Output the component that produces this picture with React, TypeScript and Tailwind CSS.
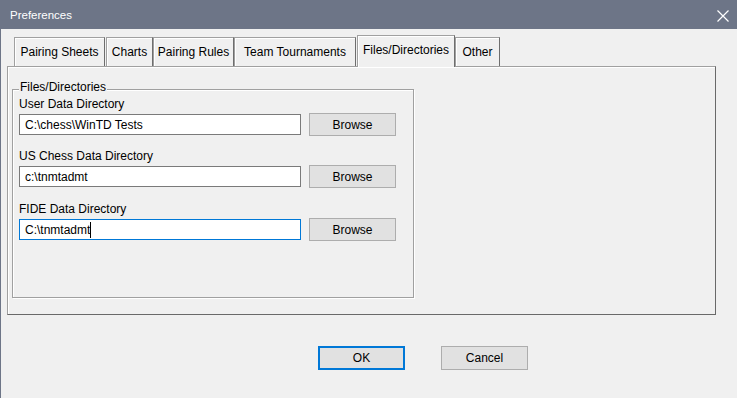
import React from 'react';

const tabs = [
    { label: 'Pairing Sheets', w: 'w-[91px]', ml: 'ml-0' },
    { label: 'Charts', w: 'w-[47px]', ml: 'ml-[1px]' },
    { label: 'Pairing Rules', w: 'w-[81px]', ml: 'ml-0' },
    { label: 'Team Tournaments', w: 'w-[122px]', ml: 'ml-0' },
    { label: 'Files/Directories', w: 'w-[98px]', ml: 'ml-[1px]', active: true },
    { label: 'Other', w: 'w-[45px]', ml: 'ml-0' },
];

const dirs = [
    { label: 'User Data Directory', value: 'C:\\chess\\WinTD Tests', mt: 'mt-0' },
    { label: 'US Chess Data Directory', value: 'c:\\tnmtadmt', mt: 'mt-[13px]' },
    { label: 'FIDE Data Directory', value: 'C:\\tnmtadmt', mt: 'mt-[14px]', focused: true },
];

function Tab({ label, w, ml, active }: { label: string; w: string; ml: string; active?: boolean }) {
    if (active) {
        return (
            <div
                className={`${w} ${ml} h-[32px] mb-[-1px] relative z-10 bg-[#f0f0f0] border border-b-0 border-[#a0a0a0] border-r-[#6e6e6e] shadow-[inset_1px_1px_0_#ffffff] pt-[7px] flex justify-center leading-[14px]`}
            >
                {label}
            </div>
        );
    }
    return (
        <div
            className={`${w} ${ml} h-[29px] bg-[#f0f0f0] border border-b-0 border-[#a0a0a0] border-r-[#6e6e6e] shadow-[inset_1px_1px_0_#ffffff] pt-[7px] flex justify-center leading-[14px]`}
        >
            {label}
        </div>
    );
}

function DirField({ label, value, mt, focused }: { label: string; value: string; mt: string; focused?: boolean }) {
    return (
        <div className={mt}>
            <div className="leading-[14px] h-[14px]">{label}</div>
            <div className="mt-[2px] flex items-center h-[23px]">
                <div
                    className={`w-[282px] h-[21px] bg-white border ${focused ? 'border-[#0078d7]' : 'border-[#7a7a7a]'} pl-[5px] flex items-center leading-[14px]`}
                >
                    <span>{value}</span>
                    {focused && <span className="w-px h-[16px] bg-black" />}
                </div>
                <button className="ml-[8px] w-[87px] h-[23px] bg-[#e1e1e1] border border-[#adadad] leading-[14px]">
                    Browse
                </button>
            </div>
        </div>
    );
}

export default function App() {
    return (
        <div className="w-[737px] h-[398px] overflow-hidden bg-[#f0f0f0] border-l border-[#6d7587] font-['Liberation_Sans',Arial,sans-serif] text-[12px] text-black">
            <div className="h-[29px] bg-[#6d7587] flex items-center pt-[2px] pl-[9px] pr-[8px] text-white text-[11.5px]">
                <span>Preferences</span>
                <svg className="ml-auto" width="12" height="12" viewBox="0 0 12 12">
                    <path d="M0.5 0.5 L11.5 11.5 M11.5 0.5 L0.5 11.5" stroke="#ffffff" strokeWidth="1.2" fill="none" />
                </svg>
            </div>

            <div className="pt-[6px]">
                <div className="flex items-end ml-[13px] h-[31px] relative z-10">
                    {tabs.map((t) => (
                        <Tab key={t.label} {...t} />
                    ))}
                </div>

                <div className="ml-[6px] w-[709px] h-[249px] border border-[#a0a0a0] border-r-[#696969] border-b-[#696969] shadow-[inset_1px_1px_0_#ffffff] pt-[22px] pl-[4px]">
                    <div className="relative w-[402px] h-[209px] border border-[#a0a0a0] shadow-[1px_1px_0_#ffffff,inset_1px_1px_0_#ffffff] pt-[7px] pl-[6px]">
                        <span className="absolute -top-[10px] left-[6px] px-px bg-[#f0f0f0] leading-[14px]">
                            Files/Directories
                        </span>
                        {dirs.map((d) => (
                            <DirField key={d.label} {...d} />
                        ))}
                    </div>
                </div>

                <div className="flex mt-[31px] ml-[317px]">
                    <button className="w-[87px] h-[24px] bg-[#e1e1e1] border-2 border-[#0078d7] leading-[14px]">OK</button>
                    <button className="ml-[36px] w-[87px] h-[24px] bg-[#e1e1e1] border border-[#adadad] leading-[14px]">
                        Cancel
                    </button>
                </div>
            </div>
        </div>
    );
}
